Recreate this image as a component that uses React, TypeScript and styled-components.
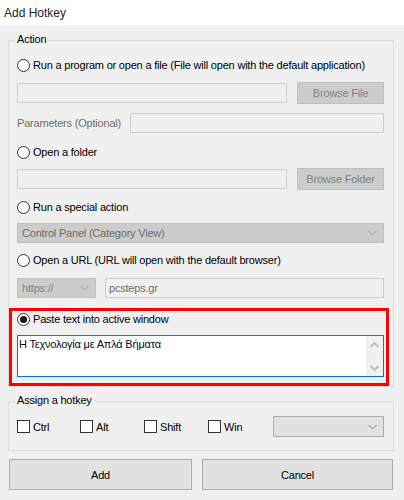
import React from "react";
import styled, { createGlobalStyle, css } from "styled-components";

const GlobalStyle = createGlobalStyle`
  html, body { margin: 0; padding: 0; background: #f0f0f0; }
  * { box-sizing: border-box; }
`;

const Window = styled.div`
  width: 404px;
  height: 500px;
  background: #f0f0f0;
  display: flex;
  flex-direction: column;
  font-family: "Liberation Sans", Arial, sans-serif;
  font-size: 11px;
  letter-spacing: -0.2px;
  color: #000;
  overflow: hidden;
`;

const TitleBar = styled.div`
  height: 25px;
  background: #fff;
  padding: 6px 0 0 4px;
  font-size: 12px;
  line-height: 14px;
  letter-spacing: 0;
  color: #1b2335;
`;

const Body = styled.div`
  display: flex;
  flex-direction: column;
  padding: 15px 10px 0 8px;
`;

const GroupBox = styled.div<{ $mt?: number; $pb: number }>`
  margin-top: ${(p) => p.$mt ?? 0}px;
  border: 1px solid #dcdcdc;
  padding: 0 9px ${(p) => p.$pb}px 8px;
  display: flex;
  flex-direction: column;
`;

const Legend = styled.div`
  align-self: flex-start;
  margin: -8px 0 0 -2px;
  padding: 0 2px;
  height: 13px;
  line-height: 13px;
  background: #f0f0f0;
`;

const RadioRow = styled.div<{ $mt: number }>`
  margin-top: ${(p) => p.$mt}px;
  height: 16px;
  display: flex;
  align-items: center;
  gap: 3px;
  line-height: 13px;
`;

const RadioCircle = styled.span<{ $checked?: boolean }>`
  width: 13px;
  height: 13px;
  border: 1px solid #333;
  border-radius: 50%;
  background: #fff;
  display: flex;
  align-items: center;
  justify-content: center;
  flex: none;
  ${(p) =>
    p.$checked &&
    css`
      &::after {
        content: "";
        width: 7px;
        height: 7px;
        border-radius: 50%;
        background: #1a1a1a;
      }
    `}
`;

const FieldRow = styled.div<{ $mt: number; $gap?: number }>`
  margin-top: ${(p) => p.$mt}px;
  display: flex;
  align-items: center;
  gap: ${(p) => p.$gap ?? 10}px;
`;

const TextField = styled.div<{ $width?: number }>`
  height: 20px;
  ${(p) => (p.$width ? css`width: ${p.$width}px; flex: none;` : css`flex: 1;`)}
  border: 1px solid #cfcfcf;
  background: #f0f0f0;
  color: #6d6d6d;
  padding: 0 3px;
  line-height: 18px;
  white-space: nowrap;
`;

const DisabledButton = styled.div`
  width: 87px;
  height: 22px;
  flex: none;
  background: #cccccc;
  border: 1px solid #bfbfbf;
  color: #838383;
  display: flex;
  align-items: center;
  justify-content: center;
`;

const ParamLabel = styled.span`
  width: 113px;
  flex: none;
  color: #6d6d6d;
  white-space: nowrap;
`;

const Combo = styled.div<{ $width?: number; $disabled?: boolean; $h?: number }>`
  height: ${(p) => p.$h ?? 20}px;
  ${(p) => (p.$width ? css`width: ${p.$width}px; flex: none;` : css`flex: 1;`)}
  background: ${(p) => (p.$disabled ? "#cccccc" : "#e1e1e1")};
  border: 1px solid ${(p) => (p.$disabled ? "#bfbfbf" : "#adadad")};
  color: #6d6d6d;
  display: flex;
  align-items: center;
  justify-content: space-between;
  padding: 0 6px 0 4px;
  white-space: nowrap;
`;

const PasteSection = styled.div`
  position: relative;
  margin-top: 13px;
  display: flex;
  flex-direction: column;
  &::after {
    content: "";
    position: absolute;
    top: -3px;
    left: -8px;
    right: -5px;
    bottom: -9px;
    border: 3px solid #ff0000;
    pointer-events: none;
  }
`;

const TextArea = styled.div`
  margin-top: 8px;
  height: 42px;
  border: 1px solid #0078d7;
  background: #fff;
  display: flex;
`;

const TextContent = styled.div`
  flex: 1;
  padding: 2px 0 0 1px;
  line-height: 13px;
  color: #0a0a28;
`;

const ScrollBar = styled.div`
  width: 17px;
  background: #f0f0f0;
  display: flex;
  flex-direction: column;
  justify-content: space-between;
`;

const ScrollArrow = styled.div`
  height: 17px;
  display: flex;
  align-items: center;
  justify-content: center;
`;

const CheckRow = styled.div`
  margin-top: 9px;
  height: 21px;
  display: flex;
  align-items: center;
`;

const CheckItem = styled.label<{ $width: number }>`
  width: ${(p) => p.$width}px;
  flex: none;
  display: flex;
  align-items: center;
  gap: 3px;
`;

const CheckBox = styled.span`
  width: 13px;
  height: 13px;
  border: 1px solid #333;
  background: #fff;
  flex: none;
`;

const ButtonRow = styled.div`
  margin-top: 8px;
  display: flex;
  padding-left: 1px;
`;

const DialogButton = styled.div<{ $width: number; $ml?: number }>`
  width: ${(p) => p.$width}px;
  margin-left: ${(p) => p.$ml ?? 0}px;
  height: 31px;
  background: #e1e1e1;
  border: 1px solid #adadad;
  display: flex;
  align-items: center;
  justify-content: center;
  color: #000;
`;

const Chevron = ({ color = "#a0a0a0" }: { color?: string }) => (
  <svg width="9" height="6" viewBox="0 0 9 6">
    <polyline points="0.5,1 4.5,5 8.5,1" fill="none" stroke={color} strokeWidth="1" />
  </svg>
);

const ScrollChevron = ({ up = false }: { up?: boolean }) => (
  <svg width="9" height="6" viewBox="0 0 9 6">
    <polyline
      points={up ? "0.5,5 4.5,1 8.5,5" : "0.5,1 4.5,5 8.5,1"}
      fill="none"
      stroke="#c0c0c0"
      strokeWidth="2"
    />
  </svg>
);

const Radio = ({ mt, checked, children }: { mt: number; checked?: boolean; children: React.ReactNode }) => (
  <RadioRow $mt={mt}>
    <RadioCircle $checked={checked} />
    <span>{children}</span>
  </RadioRow>
);

export default function App() {
  return (
    <>
      <GlobalStyle />
      <Window>
        <TitleBar>Add Hotkey</TitleBar>
        <Body>
          <GroupBox $pb={9}>
            <Legend>Action</Legend>
            <Radio mt={11}>Run a program or open a file (File will open with the default application)</Radio>
            <FieldRow $mt={9}>
              <TextField $width={270} />
              <DisabledButton>Browse File</DisabledButton>
            </FieldRow>
            <FieldRow $mt={9} $gap={0}>
              <ParamLabel>Parameters (Optional)</ParamLabel>
              <TextField />
            </FieldRow>
            <Radio mt={11}>Open a folder</Radio>
            <FieldRow $mt={8}>
              <TextField $width={270} />
              <DisabledButton>Browse Folder</DisabledButton>
            </FieldRow>
            <Radio mt={9}>Run a special action</Radio>
            <FieldRow $mt={8}>
              <Combo $disabled>
                <span>Control Panel (Category View)</span>
                <Chevron />
              </Combo>
            </FieldRow>
            <Radio mt={9}>Open a URL (URL will open with the default browser)</Radio>
            <FieldRow $mt={10} $gap={9}>
              <Combo $disabled $width={79}>
                <span style={{ color: "#838383" }}>https://</span>
                <Chevron />
              </Combo>
              <TextField>pcsteps.gr</TextField>
            </FieldRow>
            <PasteSection>
              <Radio mt={0} checked>
                Paste text into active window
              </Radio>
              <TextArea>
                <TextContent>Η Τεχνολογία με Απλά Βήματα</TextContent>
                <ScrollBar>
                  <ScrollArrow>
                    <ScrollChevron up />
                  </ScrollArrow>
                  <ScrollArrow>
                    <ScrollChevron />
                  </ScrollArrow>
                </ScrollBar>
              </TextArea>
            </PasteSection>
          </GroupBox>
          <GroupBox $mt={14} $pb={13}>
            <Legend>Assign a hotkey</Legend>
            <CheckRow>
              <CheckItem $width={63}>
                <CheckBox />
                <span>Ctrl</span>
              </CheckItem>
              <CheckItem $width={64}>
                <CheckBox />
                <span>Alt</span>
              </CheckItem>
              <CheckItem $width={64}>
                <CheckBox />
                <span>Shift</span>
              </CheckItem>
              <CheckItem $width={65}>
                <CheckBox />
                <span>Win</span>
              </CheckItem>
              <Combo $h={21}>
                <span />
                <Chevron color="#808080" />
              </Combo>
            </CheckRow>
          </GroupBox>
          <ButtonRow>
            <DialogButton $width={183}>Add</DialogButton>
            <DialogButton $width={191} $ml={10}>
              Cancel
            </DialogButton>
          </ButtonRow>
        </Body>
      </Window>
    </>
  );
}
